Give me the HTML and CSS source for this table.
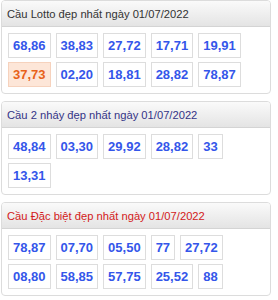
FILE: index.html
```html
<!DOCTYPE html>
<html lang="vi">
<head>
<meta charset="utf-8">
<link rel="stylesheet" href="styles.css">
</head>
<body>
<div class="page">
  <section class="panel">
    <h3 class="panel-head head-gray">Cầu Lotto đẹp nhất ngày 01/07/2022</h3>
    <div class="panel-body">
      <span class="num">68,86</span>
      <span class="num">38,83</span>
      <span class="num">27,72</span>
      <span class="num">17,71</span>
      <span class="num">19,91</span>
      <span class="num num-hot">37,73</span>
      <span class="num">02,20</span>
      <span class="num">18,81</span>
      <span class="num">28,82</span>
      <span class="num">78,87</span>
    </div>
  </section>
  <section class="panel">
    <h3 class="panel-head head-blue">Cầu 2 nháy đẹp nhất ngày 01/07/2022</h3>
    <div class="panel-body">
      <span class="num">48,84</span>
      <span class="num">03,30</span>
      <span class="num">29,92</span>
      <span class="num">28,82</span>
      <span class="num">33</span>
      <span class="num">13,31</span>
    </div>
  </section>
  <section class="panel">
    <h3 class="panel-head head-red">Cầu Đặc biệt đẹp nhất ngày 01/07/2022</h3>
    <div class="panel-body">
      <span class="num">78,87</span>
      <span class="num">07,70</span>
      <span class="num">05,50</span>
      <span class="num">77</span>
      <span class="num">27,72</span>
      <span class="num">08,80</span>
      <span class="num">58,85</span>
      <span class="num">57,75</span>
      <span class="num">25,52</span>
      <span class="num">88</span>
    </div>
  </section>
</div>
</body>
</html>
```
FILE: styles.css
```css
html, body {
  margin: 0;
  padding: 0;
  background: #ffffff;
}
body {
  font-family: "Liberation Sans", Arial, sans-serif;
}
.page {
  display: flex;
  flex-direction: column;
  gap: 7px;
  padding: 0 3px 0 1px;
  width: 274px;
  box-sizing: border-box;
}
.panel {
  border: 1px solid #dcdcdc;
  border-radius: 4px;
  background: #ffffff;
  overflow: hidden;
}
.panel-head {
  margin: 0;
  height: 25px;
  line-height: 26px;
  padding: 0 5px;
  font-size: 11.2px;
  font-weight: normal;
  border-bottom: 1px solid #d4d4d4;
  background: linear-gradient(#fafafa, #e4e4e4);
  white-space: nowrap;
}
.head-gray { color: #333333; }
.head-blue { color: #343487; }
.head-red { color: #d31a1a; }
.panel-body {
  display: flex;
  flex-wrap: wrap;
  gap: 4px 5px;
  padding: 6px 6px 6px 6px;
}
.num {
  display: block;
  height: 25px;
  box-sizing: border-box;
  line-height: 23px;
  padding: 0 4px;
  border: 1px solid #dddddd;
  font-size: 13px;
  font-weight: bold;
  color: #3456ea;
  background: #ffffff;
}
.num-hot {
  color: #e8621a;
  background: #fde6d8;
  border-color: #f6d2bd;
}
```
